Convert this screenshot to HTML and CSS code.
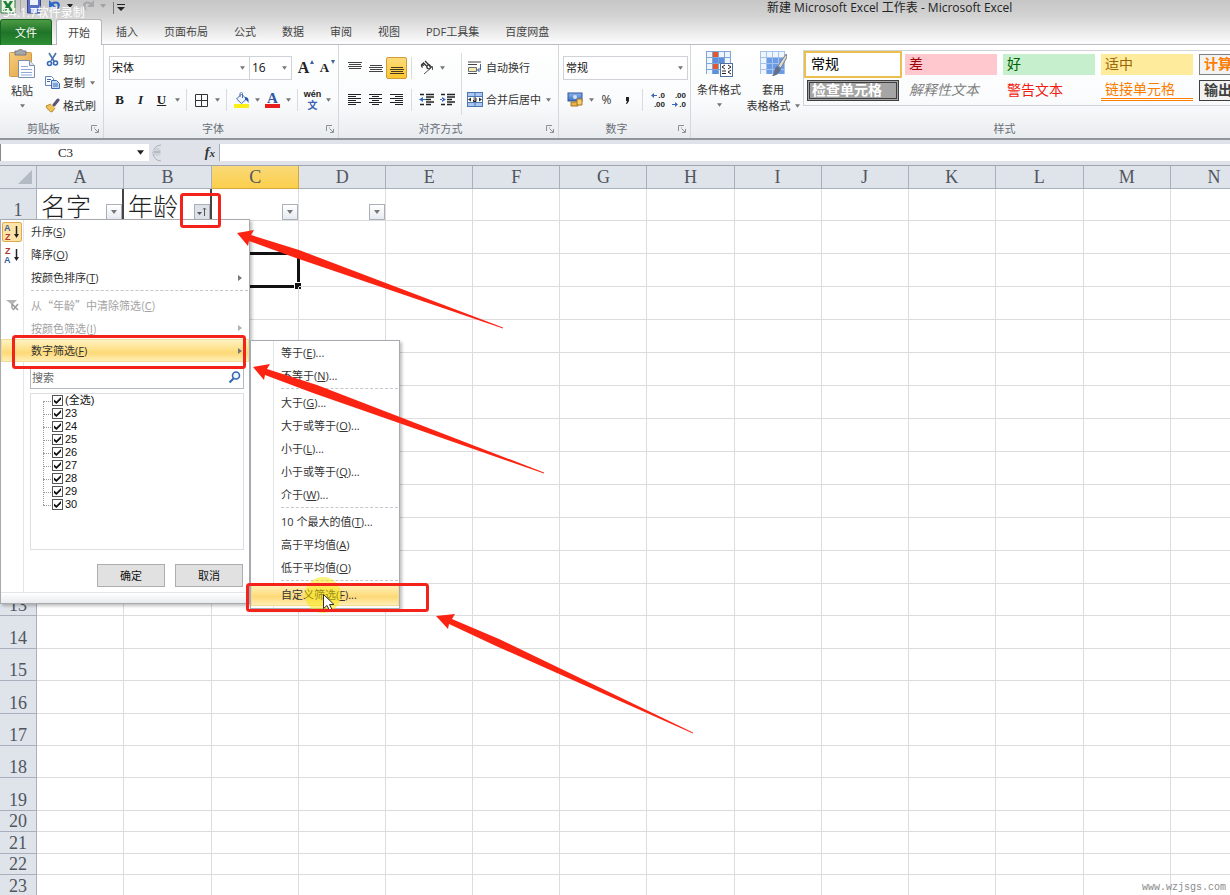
FILE: index.html
```html
<!DOCTYPE html>
<html lang="zh-CN">
<head>
<meta charset="utf-8">
<title>新建 Microsoft Excel 工作表 - Microsoft Excel</title>
<link rel="stylesheet" href="styles.css">
</head>
<body>
<svg class="defs" aria-hidden="true">
  <defs>
    <linearGradient id="blue" x1="0" y1="0" x2="0" y2="1"><stop offset="0" stop-color="#8db4ea"/><stop offset="1" stop-color="#3d6fc0"/></linearGradient>
    <linearGradient id="tan" x1="0" y1="0" x2="1" y2="1"><stop offset="0" stop-color="#f8ce7d"/><stop offset="1" stop-color="#e0a044"/></linearGradient>
    <symbol id="down" viewBox="0 0 6 4"><path d="M0 0h6L3 4z" fill="currentColor"/></symbol>
    <symbol id="right" viewBox="0 0 4 6"><path d="M0 0v6l4-3z" fill="currentColor"/></symbol>
    <symbol id="launch" viewBox="0 0 8 8"><path d="M.5 6V.5H6M3 3h1M4 4l3 3M7.500 4v3.500H4" fill="none" stroke="#8b9097"/></symbol>
  </defs>
</svg>
<div class="app">
  <header class="top">
    <div class="titlebar">
      <div class="qat">
        <svg width="16" height="16" viewBox="0 0 16 16"><path d="M1-2h14v15H1z" fill="#e9f3e6" stroke="#2e7a38"/><path d="M3 1h3l2 3 2-3h3L10 6l3 5h-3L8 8l-2 3H3l3-5z" fill="#23803a"/></svg>
        <i class="qsep"></i>
        <svg class="save" width="14" height="14" viewBox="0 0 14 14"><path d="M.5-1h13v14H.5z" fill="#5b6fc4" stroke="#36458e"/><path d="M3-1h8v6H3z" fill="#eef2fb"/><path d="M4 8h6v5H4z" fill="#cfd6ee"/></svg>
        <svg class="undo" width="14" height="14" viewBox="0 0 14 14"><path d="M1 0v7h7L5.500 4.500C9 2 11 5 8 11c7-5 4-12-4.500-8.500z" fill="#2f68c4"/></svg>
        <svg class="ar dark" width="6" height="4"><use href="#down"/></svg>
        <svg class="redo" width="14" height="14" viewBox="0 0 14 14"><path d="M13 0v7H6l2.500-2.500C5 2 3 5 6 11-1 6 2-1 10.500 2.500z" fill="#a6a8ab"/></svg>
        <svg class="ar pale" width="6" height="4"><use href="#down"/></svg>
        <i class="qsep far"></i>
        <svg class="more" width="8" height="8" viewBox="0 0 8 8"><path d="M0 0h8v1H0zM0 3h8L4 7z" fill="#222"/></svg>
      </div>
      <span class="recorder">54.1.7软件录制</span>
      <h1 class="title">新建 Microsoft Excel 工作表 - Microsoft Excel</h1>
    </div>
    <nav class="tabs">
      <button class="tab file">文件</button>
      <button class="tab active">开始</button>
      <button class="tab">插入</button>
      <button class="tab">页面布局</button>
      <button class="tab">公式</button>
      <button class="tab">数据</button>
      <button class="tab">审阅</button>
      <button class="tab">视图</button>
      <button class="tab">PDF工具集</button>
      <button class="tab">百度网盘</button>
    </nav>
  </header>

  <div class="ribbon">
    <section class="group clip">
      <div class="body">
        <button class="big paste">
          <svg width="28" height="30" viewBox="0 0 28 30"><rect x="1.500" y="3.500" width="22" height="24" rx="1" fill="url(#tan)" stroke="#d39a48"/><path d="M7 2h3c0-2 5-2 5 0h3v4H7z" fill="#a4a8ad" stroke="#777c83"/><path d="M10.500 11.500h11l5 5v12h-16z" fill="#fdfdff" stroke="#7d8fae"/><path d="M21.500 11.500v5h5" fill="#dbe4f3" stroke="#7d8fae"/><path d="M13 17.500h7M13 20.500h11M13 23.500h11M13 26h11" stroke="#8ea9d4"/></svg>
          <span>粘贴</span>
          <svg class="ar" width="5" height="4"><use href="#down"/></svg>
        </button>
        <div class="stack">
          <button class="cmd"><svg width="15" height="15" viewBox="0 0 15 15"><path d="M4 1l5 8M11 1L6 9" stroke="#4973ae" stroke-width="1.600" fill="none"/><circle cx="4.500" cy="11.500" r="2" fill="none" stroke="#3468b4" stroke-width="1.600"/><circle cx="10.500" cy="11" r="2" fill="none" stroke="#3468b4" stroke-width="1.600"/></svg>剪切</button>
          <button class="cmd"><svg width="15" height="15" viewBox="0 0 15 15"><path d="M.5 1.500h6l2 2v7h-8z" fill="#fff" stroke="#6485bb"/><path d="M6.500 5.500h5l3 3v5h-8z" fill="#c6dbf6" stroke="#3f6bb2"/><path d="M2 4.500h4M2 6.500h3M8 9h5M8 11h5" stroke="#3f6bb2"/></svg>复制<svg class="ar" width="5" height="4"><use href="#down"/></svg></button>
          <button class="cmd"><svg width="15" height="15" viewBox="0 0 15 15"><path d="M1 8l5-2 4 4-3 4c-2 0-5-3-6-6z" fill="#f1c257" stroke="#b98a35"/><path d="M6 5l5 5" stroke="#fff3cf" stroke-width="2"/><path d="M9 7l4-5" stroke="#5a5578" stroke-width="3" stroke-linecap="round"/></svg>格式刷</button>
        </div>
      </div>
      <footer class="caption"><span>剪贴板</span><svg class="launcher" width="8" height="8"><use href="#launch"/></svg></footer>
    </section>

    <section class="group font">
      <div class="body rows">
        <div class="row">
          <label class="combo name"><select aria-label="字体"><option>宋体</option></select><svg class="ar" width="5" height="4"><use href="#down"/></svg></label>
          <label class="combo size"><select aria-label="字号"><option>16</option></select><svg class="ar" width="5" height="4"><use href="#down"/></svg></label>
          <button class="ib serif grow">A<svg width="4" height="4" viewBox="0 0 4 4"><path d="M0 4h4L2 0z" fill="#3b63a8"/></svg></button>
          <button class="ib serif shrink">A<svg width="4" height="4" viewBox="0 0 4 4"><path d="M0 0h4L2 4z" fill="#3b63a8"/></svg></button>
        </div>
        <div class="row">
          <button class="ib serif"><b>B</b></button>
          <button class="ib serif"><em>I</em></button>
          <button class="ib serif"><u>U</u></button>
          <button class="dd" aria-label="更多"><svg class="ar" width="5" height="4"><use href="#down"/></svg></button>
          <i class="sep"></i>
          <button class="ib" aria-label="边框"><svg width="13" height="13" viewBox="0 0 13 13"><path d="M.5.5h12v12H.5zM6.500.5v12M.5 6.500h12" fill="none" stroke="#333"/></svg></button>
          <button class="dd" aria-label="更多"><svg class="ar" width="5" height="4"><use href="#down"/></svg></button>
          <i class="sep"></i>
          <button class="ib" aria-label="填充颜色"><svg width="16" height="16" viewBox="0 0 16 16"><path d="M2.500 7l5-5 5 5-5 4.500z" fill="#eef3fb" stroke="#4870b1"/><path d="M6 5V1.500c1-2 2.500-1 2.500 0V6" fill="none" stroke="#4870b1"/><path d="M11 5c3 0 4 2 3.500 6-1-2-2-3-3.500-3z" fill="#2b5bb0"/><path d="M0 12h15v4H0z" fill="#fbf016"/></svg></button>
          <button class="dd" aria-label="更多"><svg class="ar" width="5" height="4"><use href="#down"/></svg></button>
          <button class="ib serif fc">A<i></i></button>
          <button class="dd" aria-label="更多"><svg class="ar" width="5" height="4"><use href="#down"/></svg></button>
          <i class="sep"></i>
          <button class="ib wen"><span>wén</span><span>文</span></button>
          <button class="dd" aria-label="更多"><svg class="ar" width="5" height="4"><use href="#down"/></svg></button>
        </div>
      </div>
      <footer class="caption"><span>字体</span><svg class="launcher" width="8" height="8"><use href="#launch"/></svg></footer>
    </section>

    <section class="group align">
      <div class="body">
        <div class="rows">
          <div class="row">
            <button class="ib" aria-label="顶端对齐"><svg width="14" height="14" viewBox="0 0 14 14"><path d="M0 1.500h14M1 3.500h12M0 5.500h14M1 7.500h12" stroke="#444"/></svg></button>
            <button class="ib" aria-label="垂直居中"><svg width="14" height="14" viewBox="0 0 14 14"><path d="M1 4.500h12M0 6.500h14M1 8.500h12M0 10.500h14" stroke="#444"/></svg></button>
            <button class="ib on" aria-label="底端对齐"><svg width="14" height="14" viewBox="0 0 14 14"><path d="M1 6.500h12M0 8.500h14M1 10.500h12M0 12.500h14" stroke="#443a20"/></svg></button>
            <i class="sep"></i>
            <button class="ib" aria-label="方向"><svg width="16" height="16" viewBox="0 0 16 16"><path d="M2 5.500l2.500-2.500 3 3M3.500 7.500c-2-2 0-3.500 1.500-2" fill="none" stroke="#333" stroke-width="1.300"/><path d="M6 1l5 5M8.500 8.500c-2-2.500 1-5 2.500-3s-.5 4-2.500 3" fill="none" stroke="#333" stroke-width="1.300"/><path d="M5 14l8-7M10 6.500h3.500V10" fill="none" stroke="#555"/></svg></button>
            <button class="dd" aria-label="更多"><svg class="ar" width="5" height="4"><use href="#down"/></svg></button>
          </div>
          <div class="row">
            <button class="ib" aria-label="左对齐"><svg width="14" height="14" viewBox="0 0 14 14"><path d="M0 1.500h13M0 3.500h8M0 5.500h13M0 7.500h8M0 9.500h13M0 11.500h8" stroke="#222"/></svg></button>
            <button class="ib" aria-label="居中"><svg width="14" height="14" viewBox="0 0 14 14"><path d="M0 1.500h13M3 3.500h7M0 5.500h13M3 7.500h7M0 9.500h13M3 11.500h7" stroke="#222"/></svg></button>
            <button class="ib" aria-label="右对齐"><svg width="14" height="14" viewBox="0 0 14 14"><path d="M0 1.500h13M5 3.500h8M0 5.500h13M5 7.500h8M0 9.500h13M5 11.500h8" stroke="#222"/></svg></button>
            <i class="sep"></i>
            <button class="ib" aria-label="减少缩进"><svg width="15" height="14" viewBox="0 0 15 14"><path d="M1 1.500h4M7 1.500h8M7 4h8M7 6.500h5M7 9h8M1 11.500h4M7 11.500h5" stroke="#222" stroke-width="1.500"/><path d="M0 6.500L4 4v5zM3 6h4v1H3z" fill="#3a69b7"/></svg></button>
            <button class="ib" aria-label="增加缩进"><svg width="15" height="14" viewBox="0 0 15 14"><path d="M1 1.500h4M7 1.500h8M7 4h8M7 6.500h5M7 9h8M1 11.500h4M7 11.500h5" stroke="#222" stroke-width="1.500"/><path d="M6 6.500L2 4v5zM0 6h3v1H0z" fill="#3a69b7"/></svg></button>
          </div>
        </div>
        <i class="sep tall"></i>
        <div class="rows">
          <button class="cmd"><svg width="16" height="16" viewBox="0 0 16 16"><path d="M1 2h13M1 4.500h9M1 13.500h9" stroke="#444"/><path d="M1.500 7.500h8v4h-8z" fill="#f7e9a8" stroke="#6a6f78"/><path d="M13.500 4v6h-3M12.500 8l-2 2 2 2" fill="none" stroke="#44659f"/></svg>自动换行</button>
          <button class="cmd"><svg width="16" height="16" viewBox="0 0 16 16"><rect x=".5" y=".5" width="15" height="14" fill="#a9c6f0" stroke="#4d76b4"/><path d="M1 4.500h14M1 10.500h14M8 1v3M8 11v3" stroke="#4d76b4"/><path d="M1 5h14v5H1z" fill="#fff"/><path d="M1 7.500l3-2v4zM15 7.500l-3-2v4z" fill="#333"/><path d="M6.500 6h2.500v3.500H6.500V8H9" fill="none" stroke="#222"/></svg>合并后居中<svg class="ar" width="5" height="4"><use href="#down"/></svg></button>
        </div>
      </div>
      <footer class="caption"><span>对齐方式</span><svg class="launcher" width="8" height="8"><use href="#launch"/></svg></footer>
    </section>

    <section class="group number">
      <div class="body rows">
        <div class="row">
          <label class="combo fmt"><select aria-label="数字格式"><option>常规</option></select><svg class="ar" width="5" height="4"><use href="#down"/></svg></label>
        </div>
        <div class="row inset">
          <button class="ib" aria-label="会计数字格式"><svg width="17" height="16" viewBox="0 0 17 16"><rect x="1" y="1" width="14" height="8" fill="url(#blue)" stroke="#2d569c"/><circle cx="8" cy="5" r="2" fill="#cfe0f7"/><path d="M4 10h7v4H4z" fill="#e9b24a" stroke="#a87522"/><path d="M10 7h5v6h-5z" fill="#f6cf70" stroke="#a87522"/></svg></button>
          <button class="dd" aria-label="更多"><svg class="ar" width="5" height="4"><use href="#down"/></svg></button>
          <button class="ib pct">%</button>
          <button class="ib comma" aria-label="千位分隔"><svg width="5" height="9" viewBox="0 0 5 9"><path d="M1 1h3v4L2 8H1l1-3H1z" fill="#222"/></svg></button>
          <i class="sep"></i>
          <button class="ib dec"><span><svg width="6" height="5" viewBox="0 0 6 5"><path d="M0 2.500L3 0v2h3v1H3v2z" fill="#3a69b7"/></svg>.0</span><span>.00</span></button>
          <button class="ib dec"><span>.00</span><span><svg width="6" height="5" viewBox="0 0 6 5"><path d="M6 2.500L3 0v2H0v1h3v2z" fill="#3a69b7"/></svg>.0</span></button>
        </div>
      </div>
      <footer class="caption"><span>数字</span><svg class="launcher" width="8" height="8"><use href="#launch"/></svg></footer>
    </section>

    <section class="group styles">
      <div class="body">
        <button class="big">
          <svg width="28" height="28" viewBox="0 0 28 28"><path d="M1 2h25v23H1z" fill="#eef5fd"/><path d="M7 2h6v7H7zM7 15h6v5H7z" fill="#e4572f"/><path d="M7 9h13v6H7zM7 20h6v5H7z" fill="#5d8fdd"/><path d="M1 2.500h25M1 8.500h25M1 14.500h25M1 20.500h25M1.500 2v23M7.500 2v23M13.500 2v23M19.500 2v23M25.500 2v23" stroke="#7fa6d8" fill="none"/><rect x="15.500" y="14.500" width="12" height="13" fill="#fff" stroke="#4f6f9c"/><path d="M20 16l-3 2 3 2M17 22h4M17 24.500h4M23 16l3 2-3 2M26 21l-3 2 3 2" fill="none" stroke="#222"/></svg>
          <span>条件格式</span>
          <svg class="ar" width="5" height="4"><use href="#down"/></svg>
        </button>
        <button class="big">
          <svg width="28" height="28" viewBox="0 0 28 28"><path d="M1 2h25v23H1z" fill="#eef5fd"/><path d="M7 8h19v17H7z" fill="#6c9ce6"/><path d="M1 2.500h25M1 8.500h25M1 14.500h25M1 20.500h25M1.500 2v23M7.500 2v23M13.500 2v23M19.500 2v23M25.500 2v23" stroke="#a5c3ea" fill="none"/><path d="M27 5l-8 12 3 2 6-11z" fill="#d8d8d8" stroke="#7d7d7d"/><path d="M18 17l4 3c-2 5-5 7-9 7 3-3 2-8 5-10z" fill="#60708c"/></svg>
          <span>套用</span>
          <span class="two">表格格式<svg class="ar" width="5" height="4"><use href="#down"/></svg></span>
        </button>
        <div class="gallery">
          <button class="st picked">常规</button>
          <button class="st bad">差</button>
          <button class="st good">好</button>
          <button class="st neutral">适中</button>
          <button class="st calc">计算</button>
          <button class="st check">检查单元格</button>
          <button class="st note">解释性文本</button>
          <button class="st warn">警告文本</button>
          <button class="st link">链接单元格</button>
          <button class="st out">输出</button>
        </div>
      </div>
      <footer class="caption"><span>样式</span></footer>
    </section>
  </div>

  <div class="formula">
    <label class="namebox"><input value="C3" aria-label="名称框"><svg class="ar dark" width="7" height="5"><use href="#down"/></svg></label>
    <div class="fx">
      <svg width="16" height="18" viewBox="0 0 16 18"><path d="M12 1a8 8 0 1 0 0 16" fill="#dde1e7" stroke="#aab0b9"/><circle cx="8" cy="8" r="4" fill="#cdd1d8"/><path d="M5 8h6" stroke="#9da3ad"/></svg>
      <button class="fn"><i>f</i><i>x</i></button>
    </div>
    <input class="entry" aria-label="编辑栏">
  </div>

  <main class="sheet">
    <table class="grid">
      <thead><tr id="heads"><th class="corner"><svg width="14" height="14" viewBox="0 0 14 14"><path d="M14 0v14H0z" fill="#b4bac4"/></svg></th></tr></thead>
      <tbody id="rows"></tbody>
    </table>
  </main>

  <div class="menu main-menu">
    <button class="item"><span class="ico lit"><svg width="17" height="18" viewBox="0 0 17 18"><text x="0" y="8" class="az b">A</text><text x="1" y="17" class="az r">Z</text><path d="M12.500 3v10" stroke="#222" stroke-width="1.500"/><path d="M10 11h5l-2.500 4z" fill="#222"/></svg></span>升序(<u>S</u>)</button>
    <button class="item"><span class="ico"><svg width="17" height="18" viewBox="0 0 17 18"><text x="1" y="8" class="az r">Z</text><text x="0" y="17" class="az b">A</text><path d="M12.500 3v10" stroke="#222" stroke-width="1.500"/><path d="M10 11h5l-2.500 4z" fill="#222"/></svg></span>降序(<u>O</u>)</button>
    <button class="item">按颜色排序(<u>T</u>)<svg class="sub" width="4" height="6"><use href="#right"/></svg></button>
    <hr>
    <button class="item off" disabled><span class="ico"><svg width="14" height="14" viewBox="0 0 14 14"><path d="M1 2h11L8 6v6L6 10V6z" fill="#b4b4b4"/><path d="M7 6l6 6M13 6l-5 6" stroke="#999" stroke-width="1.500"/></svg></span>从“年龄”中清除筛选(<u>C</u>)</button>
    <button class="item off" disabled>按颜色筛选(<u>I</u>)<svg class="sub" width="4" height="6"><use href="#right"/></svg></button>
    <button class="item hot">数字筛选(<u>F</u>)<svg class="sub" width="4" height="6"><use href="#right"/></svg></button>
    <div class="panel">
      <label class="search"><input placeholder="搜索" aria-label="搜索"><svg width="13" height="13" viewBox="0 0 13 13"><circle cx="8" cy="4.500" r="3.500" fill="#eef4fc" stroke="#3568b3" stroke-width="1.600"/><path d="M5.500 7.500L1.500 11.500" stroke="#3568b3" stroke-width="2.200"/></svg></label>
      <div class="tree">
        <label class="all"><input type="checkbox" checked>(全选)</label>
        <label><input type="checkbox" checked>23</label>
        <label><input type="checkbox" checked>24</label>
        <label><input type="checkbox" checked>25</label>
        <label><input type="checkbox" checked>26</label>
        <label><input type="checkbox" checked>27</label>
        <label><input type="checkbox" checked>28</label>
        <label><input type="checkbox" checked>29</label>
        <label><input type="checkbox" checked>30</label>
      </div>
      <div class="actions"><button>确定</button><button>取消</button></div>
    </div>
    <div class="grip"></div>
  </div>

  <div class="menu sub-menu">
    <button class="item">等于(<u>E</u>)...</button>
    <button class="item">不等于(<u>N</u>)...</button>
    <hr>
    <button class="item">大于(<u>G</u>)...</button>
    <button class="item">大于或等于(<u>O</u>)...</button>
    <button class="item">小于(<u>L</u>)...</button>
    <button class="item">小于或等于(<u>Q</u>)...</button>
    <button class="item">介于(<u>W</u>)...</button>
    <hr>
    <button class="item">10 个最大的值(<u>T</u>)...</button>
    <button class="item">高于平均值(<u>A</u>)</button>
    <button class="item">低于平均值(<u>O</u>)</button>
    <hr>
    <button class="item hot">自定义筛选(<u>F</u>)...</button>
  </div>

  <svg class="marks" width="720" height="760" viewBox="0 0 720 760" aria-hidden="true">
    <circle cx="323" cy="595" r="18" fill="#f7e600" fill-opacity=".5"/>
    <path d="M323.500 594.500v14l3.500-3 2.500 5 2.500-1-2.500-5h4.500z" fill="#fff" stroke="#333"/>
    <g fill="none" stroke="#f3231b" stroke-width="3">
      <rect x="181.500" y="194.500" width="38" height="32" rx="2"/>
      <rect x="13.500" y="336.500" width="231" height="31" rx="2"/>
      <rect x="247.500" y="584.500" width="180" height="26" rx="2"/>
    </g>
    <g fill="#fb2413">
      <path d="M237 233l17-3-3 5 48 15 204 77.500v1L296 258l-47-17-1 5z"/>
      <path d="M253 367l17-3-3 5 50 16 227 87.500v1L313 393l-48-18-1 5z"/>
      <path d="M436 616l19-2-3 5 47 20 194 93.500v1L496 646l-47-22-1 5z"/>
    </g>
  </svg>
  <span class="watermark">www.wzjsgs.com</span>
</div>
<script src="script.js"></script>
</body>
</html>
```
FILE: styles.css
```css
* { box-sizing: border-box; }
body {
  margin: 0;
  font: 11px/16px "Open Sans", "Noto Sans CJK SC", sans-serif;
  color: #333;
}
button, input, select { font: inherit; color: inherit; margin: 0; padding: 0; border: 0; background: none; }
.defs { position: absolute; width: 0; height: 0; }
.app { position: relative; display: flex; flex-direction: column; height: 100vh; overflow: hidden; background: #fff; }
.ar { color: #777; flex: none; }
.ar.dark { color: #222; }
.ar.pale { color: #a2a2a2; }

/* title bar and tabs */
.top { background: linear-gradient(#c6c6c6, #d2d2d2 35%, #fdfdfd); border-bottom: 1px solid #b9bcc0; }
.titlebar { position: relative; display: flex; height: 19px; }
.qat { display: flex; align-items: flex-start; height: 16px; width: 640px; }
.qat .ar { margin: 4px 0 0 5px; }
.qsep { width: 1px; height: 12px; margin: 0 4px; background: #a8a8a8; }
.qsep.far { margin: 2px 3px 0 7px; background: #777; }
.save { margin-left: 2px; }
.undo { margin-left: 7px; }
.redo { margin-left: 8px; }
.more { margin-top: 4px; }
.recorder { position: absolute; left: 3px; top: 5px; color: #fff; font-size: 12px; }
.title { margin: 0; flex: 1; font-size: 12px; line-height: 16px; font-weight: 400; color: #222; padding-left: 127px; white-space: nowrap; }
.tabs { display: flex; height: 26px; margin-bottom: -1px; }
.tab { padding: 0 13px; color: #444; white-space: nowrap; }
.tab.file { width: 52px; margin-right: 4px; color: #fff; background: linear-gradient(#4d9a45, #1e7428 50%, #2f8f35); border: 1px solid #1b6523; border-bottom: 0; border-radius: 3px 3px 0 0; }
.tab.active { padding: 0 11px; width: 46px; margin-right: 1px; background: #fff; border: 1px solid #b4b7bb; border-bottom: 0; border-radius: 3px 3px 0 0; }

/* ribbon */
.ribbon { display: flex; height: 95px; background: linear-gradient(#fff, #fafbfc 60%, #e9ecef); border-bottom: 2px solid #90959c; }
.group { display: flex; flex-direction: column; flex: none; border-right: 1px solid #d4d7db; }
.clip { width: 104px; }
.font { width: 235px; }
.align { width: 220px; }
.number { width: 132px; }
.styles { flex: 1; min-width: 0; border: 0; }
.body { display: flex; flex: 1; min-height: 0; }
.rows { display: flex; flex-direction: column; gap: 8px; padding-top: 11px; }
.row { display: flex; align-items: center; height: 24px; }
.caption { position: relative; height: 18px; line-height: 18px; text-align: center; color: #6a6f78; padding-right: 16px; }
.launcher { position: absolute; right: 4px; top: 5px; }
.styles .caption { padding: 0 0 0 88px; }

.big { display: flex; flex-direction: column; align-items: center; width: 54px; padding-top: 4px; flex: none; white-space: nowrap; }
.big > span { line-height: 16px; margin-top: 5px; }
.big > .two { margin-top: 0; }
.big > .ar { margin-top: 5px; }
.big .two .ar { margin: 0 0 2px 4px; }
.paste { width: 44px; }
.big.paste > span { margin-top: 4px; }
.stack { display: flex; flex-direction: column; padding: 3px 0 0 1px; }
.cmd { display: flex; align-items: center; gap: 3px; height: 23px; white-space: nowrap; }
.align .cmd { height: 24px; }
.cmd .ar { margin-left: 2px; }

.font .body { padding-left: 5px; }
.combo { display: flex; align-items: center; position: relative; height: 24px; border: 1px solid #cfd2d6; background: #fff; }
.combo select { appearance: none; width: 100%; height: 100%; padding-left: 2px; color: #111; }
.combo .ar { position: absolute; right: 4px; }
.name { width: 141px; }
.size { width: 43px; margin-left: -1px; font-size: 12px; }
.fmt { width: 125px; }
.number .body { padding-left: 4px; }
.inset { padding-left: 2px; }
.ib { position: relative; display: flex; align-items: center; justify-content: center; width: 21px; height: 22px; flex: none; }
.dd { display: flex; align-items: center; justify-content: center; width: 10px; height: 22px; flex: none; }
.sep { width: 1px; height: 22px; margin: 0 4px; background: #d9dbde; flex: none; }
.sep.tall { height: 62px; margin: 8px 5px 0 3px; }
.serif { font: 700 13px/16px "Liberation Serif", serif; color: #222; }
.grow { font-size: 16px; margin-left: 1px; }
.shrink { font-size: 13px; }
.grow svg, .shrink svg { position: absolute; top: 3px; right: 0; }
.fc { font-size: 15px; color: #2f58a5; padding-bottom: 5px; }
.fc i { position: absolute; left: 3px; bottom: 3px; width: 15px; height: 4px; background: #ea1d1d; }
.wen { flex-direction: column; font: 700 9px/10px "Liberation Sans", sans-serif; color: #222; }
.wen span + span { font: 700 10px/12px "Noto Sans CJK SC", sans-serif; color: #3b63b5; }
.on { border: 1px solid #cf9c36; border-radius: 2px; background: linear-gradient(#fbdc7b, #ffc62f); }
.align .body { padding-left: 5px; }
.pct { font-size: 12px; }
.dec { flex-direction: column; align-items: flex-end; font: 700 8px/9px "Liberation Sans", sans-serif; color: #222; padding-right: 3px; }
.dec svg { margin-right: 1px; }

.gallery { display: grid; grid-template-columns: repeat(5, 92px); grid-auto-rows: 21px; gap: 5px 6px; flex: 1; min-width: 0; overflow: hidden; height: 56px; margin: 5px 0 0 3px; padding: 3px 0 0 3px; border: 1px solid #d0d3d7; border-right: 0; }
.styles .body { padding-left: 1px; }
.st { text-align: left; padding-left: 4px; font: 14px/19px "Liberation Sans", "Noto Sans CJK SC", sans-serif; white-space: nowrap; overflow: hidden; }
.picked { background: #fff; color: #000; outline: 2px solid #ecc04f; outline-offset: 1px; }
.bad { background: #ffc7ce; color: #9c0006; }
.good { background: #c6efce; color: #006100; }
.neutral { background: #ffeb9c; color: #9c6500; }
.calc { background: #f2f2f2; border: 1px solid #7f7f7f; color: #fa7d00; font-weight: 700; }
.check { background: #a5a5a5; border: 3px double #3f3f3f; color: #fff; font-weight: 700; line-height: 15px; padding-left: 2px; }
.note { color: #7f7f7f; font-style: italic; }
.warn { color: #f01c10; }
.link { color: #fa7d00; border-bottom: 3px double #ff8001; line-height: 17px; }
.out { background: #f2f2f2; border: 1px solid #3f3f3f; color: #3f3f3f; font-weight: 700; }

/* formula bar */
.formula { display: flex; height: 26px; padding: 4px 0; background: #dfe3e9; border-bottom: 1px solid #9ea5b0; }
.namebox { display: flex; align-items: center; width: 149px; background: #fff; border-left: 1px solid #888; }
.namebox input { flex: 1; min-width: 0; padding-right: 7px; text-align: center; font: 13px/16px "Liberation Serif", serif; color: #222; }
.namebox .ar { margin-right: 5px; }
.fx { display: flex; justify-content: space-between; width: 71px; border-right: 1px solid #a5abb5; }
.fn { font: 700 14px/16px "Liberation Serif", serif; color: #333; padding-right: 4px; }
.fn i + i { font-size: 11px; }
.entry { flex: 1; min-width: 0; background: #fff; }

/* worksheet */
.sheet { flex: 1; min-height: 0; overflow: hidden; }
.grid { table-layout: fixed; width: 1258px; border-collapse: separate; border-spacing: 0; }
.grid th, .grid td { padding: 0; height: inherit; border: solid #dcdcdc; border-width: 0 1px 1px 0; position: relative; }
.grid th { background: #dfe3ea; border-color: #a9b0bb; font: 18px/20px "Liberation Serif", "Noto Sans CJK SC", serif; color: #50565e; }
.grid thead th { height: 23px; width: 87px; }
.grid thead th.wide { width: 88px; }
.grid thead th.corner { width: 37px; text-align: right; line-height: 14px; padding-right: 4px; }
.grid thead th.current { background: linear-gradient(#f9d978, #fccf4c); border-color: #d3a73f; }
.grid tbody th { vertical-align: bottom; }
.tall-row { height: 33px; }
.mid-row { height: 32px; }
.low-row { height: 22px; }
.min-row { height: 21px; }
.grid td { white-space: nowrap; font: 25px/30px "Noto Sans CJK SC", sans-serif; font-weight: 300; color: #222; }
.grid td.title-cell { border-right: 2px solid #444; padding-left: 4px; }
.filter { position: absolute; right: 0; bottom: 0; width: 16px; height: 16px; display: flex; align-items: center; justify-content: center; border: 1px solid #aab0ba; background: linear-gradient(#fff, #e6eaf0); }
.filter.sorted { background: #dce1ea; }
.picker { position: absolute; inset: -2px -2px -2px -2px; border: 3px solid #111; }
.picker::after { content: ""; position: absolute; right: -4px; bottom: -4px; width: 6px; height: 6px; background: #111; border: solid #fff; border-width: 1px 0 0 1px; }

/* menus */
.menu { position: absolute; display: flex; flex-direction: column; border: 1px solid #a7abb0; box-shadow: 2px 2px 3px rgba(0, 0, 0, .25); background: linear-gradient(90deg, #fff 22px, #e3e5e8 22px, #e3e5e8 23px, #fff 23px); color: #333; }
.main-menu { left: 0; top: 219px; width: 250px; }
.sub-menu { left: 250px; top: 340px; width: 150px; padding-bottom: 2px; }
.item { position: relative; display: flex; align-items: center; height: 23px; padding-left: 30px; white-space: nowrap; }
.item u { text-underline-offset: 1px; }
.item.off { color: #a3a3a3; font-family: "Noto Sans CJK SC", sans-serif; }
.item.off .sub { color: #b0b0b0; }
.item.hot { background: linear-gradient(#fff3c8, #fee18a 45%, #fdd978 60%, #fff0bb); box-shadow: inset 0 0 0 1px #f2dc96; }
.ico { position: absolute; left: 1px; top: 2px; width: 20px; height: 20px; display: flex; align-items: center; justify-content: center; }
.ico.lit { border: 1px solid #e2a94a; border-radius: 2px; background: #fde3a7; }
.az { font: 700 9px "Liberation Sans", sans-serif; }
.az.b { fill: #3d5f9c; }
.az.r { fill: #b1392f; }
.sub { position: absolute; right: 7px; color: #777; }
.menu hr { height: 1px; margin: 1px 1px 2px 30px; border: 0; border-top: 1px dashed #c4c7cb; }
.panel { padding: 4px 5px 5px 29px; }
.search { display: flex; align-items: center; height: 23px; border: 1px solid #b5bac1; background: #fff; padding: 0 2px 0 1px; }
.search input { flex: 1; min-width: 0; }
.search input::placeholder { color: #666; opacity: 1; }
.tree { position: relative; margin-top: 4px; height: 157px; border: 1px solid #dcdee1; background: #fff; }
.tree::before { content: ""; position: absolute; left: 12px; top: 7px; height: 104px; border-left: 1px dotted #999; }
.tree label { position: relative; display: flex; align-items: center; gap: 2px; height: 13px; padding-left: 21px; font: 11px/13px "Liberation Sans", "Noto Sans CJK SC", sans-serif; color: #111; }
.tree label::before { content: ""; position: absolute; left: 12px; top: 7px; width: 8px; border-top: 1px dotted #999; }
.tree input { appearance: none; width: 11px; height: 11px; border: 1px solid #555; background: #fff; display: grid; place-items: center; }
.tree input:checked::after { content: ""; width: 7px; height: 7px; background: #111; clip-path: polygon(0 35%, 35% 65%, 100% 0, 100% 35%, 35% 100%, 0 70%); }
.actions { display: flex; justify-content: flex-end; gap: 10px; margin: 14px 1px 0 0; }
.actions button { width: 68px; height: 23px; border: 1px solid #adadad; background: #e1e1e1; color: #111; }
.grip { height: 11px; border-top: 1px solid #e2e4e7; background: linear-gradient(#fff, #e9ebee); }

.marks { position: absolute; left: 0; top: 0; pointer-events: none; }
.watermark { position: absolute; right: 4px; bottom: 0; font: 10px/14px "Liberation Mono", monospace; color: #8c8c8c; }
```
FILE: script.js
```js
const heads = document.getElementById("heads");
const rows = document.getElementById("rows");
const letters = "ABCDEFGHIJKLMN".split("");
const arrow = '<svg class="ar" width="6" height="4"><use href="#down"/></svg>';
const sorted = '<svg width="10" height="10" viewBox="0 0 10 10"><path d="M0 5h5L2.500 8z" fill="#555"/><path d="M7.500 9V1M6 2.500L7.500 1 9 2.500" fill="none" stroke="#555"/></svg>';
const cells = {
  A1: "名字<button class='filter' aria-label='筛选'>" + arrow + "</button>",
  B1: "年龄<button class='filter sorted' aria-label='筛选'>" + sorted + "</button>",
  C1: "<button class='filter' aria-label='筛选'>" + arrow + "</button>",
  D1: "<button class='filter' aria-label='筛选'>" + arrow + "</button>",
  C3: "<div class='picker'></div>"
};

letters.forEach(function (letter) {
  const th = document.createElement("th");
  th.textContent = letter;
  if (letter === "C") th.className = "current";
  if (letter === "B" || letter === "L") th.className = "wide";
  heads.appendChild(th);
});

function rowClass(n) {
  if (n > 19) return n % 2 ? "low-row" : "min-row";
  return [1, 13, 15, 17, 18].includes(n) ? "mid-row" : "tall-row";
}

for (let n = 1; n <= 23; n++) {
  const tr = document.createElement("tr");
  tr.className = rowClass(n);
  tr.innerHTML = "<th>" + n + "</th>" + letters.map(function (letter) {
    const id = letter + n;
    const title = id === "A1" || id === "B1" ? ' class="title-cell"' : "";
    return "<td" + title + ">" + (cells[id] || "") + "</td>";
  }).join("");
  rows.appendChild(tr);
}
```
